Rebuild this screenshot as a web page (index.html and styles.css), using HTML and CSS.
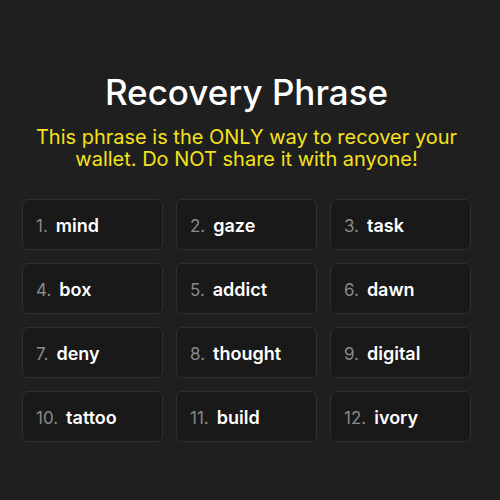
FILE: index.html
```html
<!DOCTYPE html>
<html>
<head>
<meta charset="utf-8">
<link rel="stylesheet" href="styles.css">
</head>
<body>
<main class="wrap">
  <h1 class="title">Recovery Phrase</h1>
  <p class="warning">This phrase is the ONLY way to recover your wallet. Do NOT share it with anyone!</p>
  <ol class="grid">
    <li class="word"><span class="num">1.</span><span class="text">mind</span></li>
    <li class="word"><span class="num">2.</span><span class="text">gaze</span></li>
    <li class="word"><span class="num">3.</span><span class="text">task</span></li>
    <li class="word"><span class="num">4.</span><span class="text">box</span></li>
    <li class="word"><span class="num">5.</span><span class="text">addict</span></li>
    <li class="word"><span class="num">6.</span><span class="text">dawn</span></li>
    <li class="word"><span class="num">7.</span><span class="text">deny</span></li>
    <li class="word"><span class="num">8.</span><span class="text">thought</span></li>
    <li class="word"><span class="num">9.</span><span class="text">digital</span></li>
    <li class="word"><span class="num">10.</span><span class="text">tattoo</span></li>
    <li class="word"><span class="num">11.</span><span class="text">build</span></li>
    <li class="word"><span class="num">12.</span><span class="text">ivory</span></li>
  </ol>
</main>
</body>
</html>
```
FILE: styles.css
```css
html, body {
  margin: 0;
  padding: 0;
  background: #1f1f1f;
  height: 100%;
}
body {
  font-family: Inter, "Noto Sans", sans-serif;
  color: #ffffff;
}
.wrap {
  width: 449px;
  margin-left: 22px;
  padding-top: 70px;
}
.title {
  margin: 0;
  font-size: 35px;
  line-height: 44px;
  font-weight: 500;
  text-align: center;
  color: #ffffff;
}
.warning {
  margin: 12px 0 0;
  font-size: 20px;
  line-height: 22px;
  text-align: center;
  color: #f5e21c;
}
.grid {
  list-style: none;
  margin: 29px 0 0;
  padding: 0;
  display: grid;
  grid-template-columns: repeat(3, 141px);
  column-gap: 13px;
  row-gap: 13px;
}
.word {
  display: flex;
  align-items: baseline;
  gap: 8px;
  height: 51px;
  box-sizing: border-box;
  padding: 15px 13px 13px;
  background: #191919;
  border: 1px solid #2f2f2f;
  border-radius: 6px;
}
.num {
  font-size: 17px;
  line-height: 22px;
  color: #8a8a8a;
}
.text {
  font-size: 18px;
  line-height: 22px;
  font-weight: 600;
  color: #ffffff;
}
```
